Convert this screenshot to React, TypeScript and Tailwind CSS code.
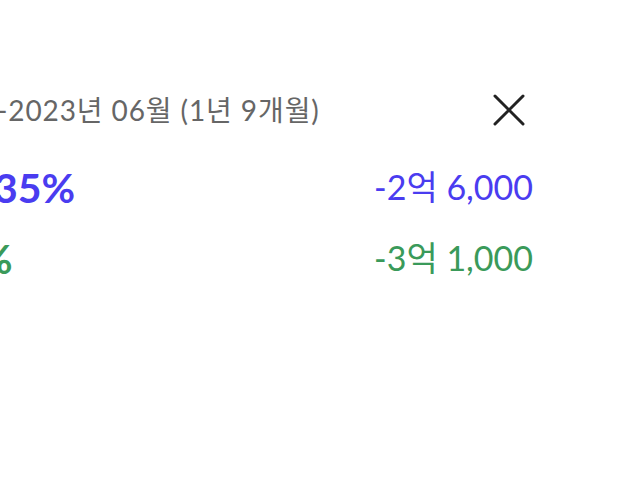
import React from "react";

const font = { fontFamily: "Lato, 'Noto Sans CJK KR', sans-serif" };

function CloseIcon() {
  return (
    <svg width="32" height="32" viewBox="0 0 32 32" fill="none">
      <path d="M2 2 L30 30 M30 2 L2 30" stroke="#222" strokeWidth="3" strokeLinecap="round" />
    </svg>
  );
}

export default function App() {
  return (
    <div className="w-[640px] h-[493px] bg-white overflow-hidden" style={font}>
      <div className="pt-[93px] pr-[107px] flex flex-col">
        {/* Period + close */}
        <div className="flex items-center justify-between h-[34px]">
          <p className="-ml-[3px] text-[28px] tracking-[0.9px] leading-none text-[#666] whitespace-nowrap">
            -2023년 06월 (1년 9개월)
          </p>
          <button className="mr-[8px]">
            <CloseIcon />
          </button>
        </div>

        {/* Rows */}
        <div className="mt-[40px] flex items-center justify-between h-[40px]">
          <span className="-ml-[6px] text-[41px] font-bold leading-none text-[#4a3cf0]">35%</span>
          <span className="text-[34px] leading-none text-[#4a3cf0]">-2억 6,000</span>
        </div>
        <div className="mt-[31px] flex items-center justify-between h-[40px]">
          <span className="-ml-[21px] text-[41px] font-bold leading-none text-[#3a9a5a]">%</span>
          <span className="text-[34px] leading-none text-[#3a9a5a]">-3억 1,000</span>
        </div>
      </div>
    </div>
  );
}
